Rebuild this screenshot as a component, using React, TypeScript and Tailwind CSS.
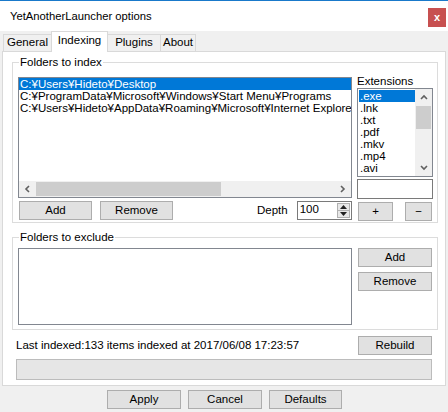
import React from "react";

const font = { fontFamily: '"Liberation Sans", "Noto Sans CJK JP", sans-serif' };

function Btn({ label, className = "" }: { label: string; className?: string }) {
  return (
    <div
      className={`flex h-[19px] items-center justify-center border border-[#adadad] bg-[#e1e1e1] text-[11.5px] text-black ${className}`}
    >
      {label}
    </div>
  );
}

function GroupBox({ title, className = "", children }: { title: string; className?: string; children: React.ReactNode }) {
  return (
    <div className={`relative ml-[9px] w-[426px] border border-[#dcdcdc] ${className}`}>
      <span className="absolute left-[6px] top-[-7px] bg-white px-[1px] text-[11.5px] leading-[13px] text-black">
        {title}
      </span>
      {children}
    </div>
  );
}

const folders = [
  "C:¥Users¥Hideto¥Desktop",
  "C:¥ProgramData¥Microsoft¥Windows¥Start Menu¥Programs",
  "C:¥Users¥Hideto¥AppData¥Roaming¥Microsoft¥Internet Explorer¥Quick Launch",
];

const extensions = [".exe", ".lnk", ".txt", ".pdf", ".mkv", ".mp4", ".avi"];

function Chevron({ dir }: { dir: "up" | "down" | "left" | "right" }) {
  const d = {
    up: "M1 5 L4 2 L7 5",
    down: "M1 2 L4 5 L7 2",
    left: "M5 1 L2 4 L5 7",
    right: "M2 1 L5 4 L2 7",
  }[dir];
  return (
    <svg width="8" height="8" viewBox="0 0 8 8">
      <path d={d} fill="none" stroke="#606060" strokeWidth="1.6" />
    </svg>
  );
}

export default function App() {
  return (
    <div className="relative h-[412px] w-[448px] overflow-hidden bg-[#f0f0f0] text-[11.5px] text-black" style={font}>
      {/* title bar */}
      <div className="flex h-[31px] items-center justify-between border-t border-[#1979ca] bg-white pl-[10px] pr-[2px]">
        <span className="text-[11.25px]">YetAnotherLauncher options</span>
        <div className="mt-[2px] flex h-[19px] w-[18px] items-center justify-center bg-[#c75050] text-[11px] font-bold leading-none text-white">
          x
        </div>
      </div>

      {/* tabs */}
      <div className="flex h-[20px] items-end pl-[3px]">
        <div className="flex h-[17px] w-[48px] items-center justify-center border border-b-0 border-r-0 border-[#d9d9d9] bg-[#f0f0f0]">
          General
        </div>
        <div className="relative z-10 mb-[-1px] flex h-[21px] w-[57px] items-center justify-center border border-b-0 border-[#d9d9d9] bg-white pb-[3px]">
          Indexing
        </div>
        <div className="flex h-[17px] w-[53px] items-center justify-center border border-b-0 border-l-0 border-[#d9d9d9] bg-[#f0f0f0]">
          Plugins
        </div>
        <div className="flex h-[17px] w-[35px] items-center justify-center border border-b-0 border-l-0 border-[#d9d9d9] bg-[#f0f0f0]">
          About
        </div>
      </div>

      {/* panel */}
      <div className="mx-[2px] h-[335px] border border-[#d9d9d9] bg-white">
        <GroupBox title="Folders to index" className="mt-[10px] h-[161px]">
          <div className="flex pl-[5px] pt-[14px]">
            <div className="flex w-[334px] flex-col">
              <div className="flex h-[121px] flex-col border border-[#828790]">
                <div className="flex-1 overflow-hidden leading-[12px]">
                  {folders.map((f, i) => (
                    <div
                      key={f}
                      className={`h-[12px] whitespace-nowrap pl-[1px] ${i === 0 ? "bg-[#0078d7] text-white" : ""}`}
                    >
                      {f}
                    </div>
                  ))}
                </div>
                <div className="flex h-[16px] bg-[#f0f0f0]">
                  <div className="flex w-[17px] items-center justify-center">
                    <Chevron dir="left" />
                  </div>
                  <div className="my-[1px] w-[185px] bg-[#cdcdcd]" />
                  <div className="flex-1" />
                  <div className="flex w-[17px] items-center justify-center">
                    <Chevron dir="right" />
                  </div>
                </div>
              </div>
              <div className="mt-[3px] flex items-center">
                <Btn label="Add" className="ml-[1px] w-[73px]" />
                <Btn label="Remove" className="ml-[8px] w-[73px]" />
                <span className="ml-[84px]">Depth</span>
                <div className="ml-[9px] flex h-[19px] w-[55px] border border-[#7a7a7a]">
                  <span className="flex-1 pl-[2px] leading-[15px]">100</span>
                  <div className="m-[1px] flex w-[13px] flex-col border border-[#b0b0b0] bg-[#e8e8e8]">
                    <div className="flex flex-1 items-center justify-center border-b border-[#b0b0b0]">
                      <svg width="7" height="4" viewBox="0 0 7 4">
                        <path d="M0 4 L3.5 0 L7 4 Z" fill="#222" />
                      </svg>
                    </div>
                    <div className="flex flex-1 items-center justify-center">
                      <svg width="7" height="4" viewBox="0 0 7 4">
                        <path d="M0 0 L3.5 4 L7 0 Z" fill="#222" />
                      </svg>
                    </div>
                  </div>
                </div>
              </div>
            </div>

            <div className="ml-[5px] flex w-[76px] flex-col">
              <span className="mt-[-2px] h-[13px] leading-[12px]">Extensions</span>
              <div className="flex h-[89px] border border-[#828790]">
                <div className="flex-1 overflow-hidden pt-[1px] leading-[12px]">
                  {extensions.map((e, i) => (
                    <div key={e} className={`ml-[1px] h-[12px] pl-[1px] ${i === 0 ? "bg-[#0078d7] text-white" : ""}`}>
                      {e}
                    </div>
                  ))}
                </div>
                <div className="flex w-[17px] flex-col bg-[#f0f0f0]">
                  <div className="flex h-[17px] items-center justify-center">
                    <Chevron dir="up" />
                  </div>
                  <div className="mx-[1px] h-[23px] bg-[#cdcdcd]" />
                  <div className="flex-1" />
                  <div className="flex h-[17px] items-center justify-center">
                    <Chevron dir="down" />
                  </div>
                </div>
              </div>
              <div className="mt-[2px] h-[20px] border border-[#7a7a7a]" />
              <div className="mt-[3px] flex justify-between">
                <Btn label="+" className="ml-[1px] w-[35px]" />
                <Btn label="−" className="mr-[1px] w-[27px]" />
              </div>
            </div>
          </div>
        </GroupBox>

        <GroupBox title="Folders to exclude" className="mt-[14px] h-[93px]">
          <div className="flex pl-[5px] pt-[10px]">
            <div className="h-[77px] w-[334px] border border-[#828790]" />
            <div className="ml-[6px] flex w-[74px] flex-col gap-[5px]">
              <Btn label="Add" />
              <Btn label="Remove" />
            </div>
          </div>
        </GroupBox>

        <div className="mt-[6px] flex items-center pl-[13px]">
          <span className="w-[342px]">Last indexed:133 items indexed at 2017/06/08 17:23:57</span>
          <Btn label="Rebuild" className="w-[74px]" />
        </div>
        <div className="ml-[13px] mt-[4px] h-[21px] w-[416px] border border-[#bcbcbc] bg-[#e6e6e6]" />
      </div>

      {/* bottom buttons */}
      <div className="mt-[4px] flex pl-[107px]">
        <Btn label="Apply" className="w-[74px]" />
        <Btn label="Cancel" className="ml-[7px] w-[74px]" />
        <Btn label="Defaults" className="ml-[7px] w-[73px]" />
      </div>
    </div>
  );
}
